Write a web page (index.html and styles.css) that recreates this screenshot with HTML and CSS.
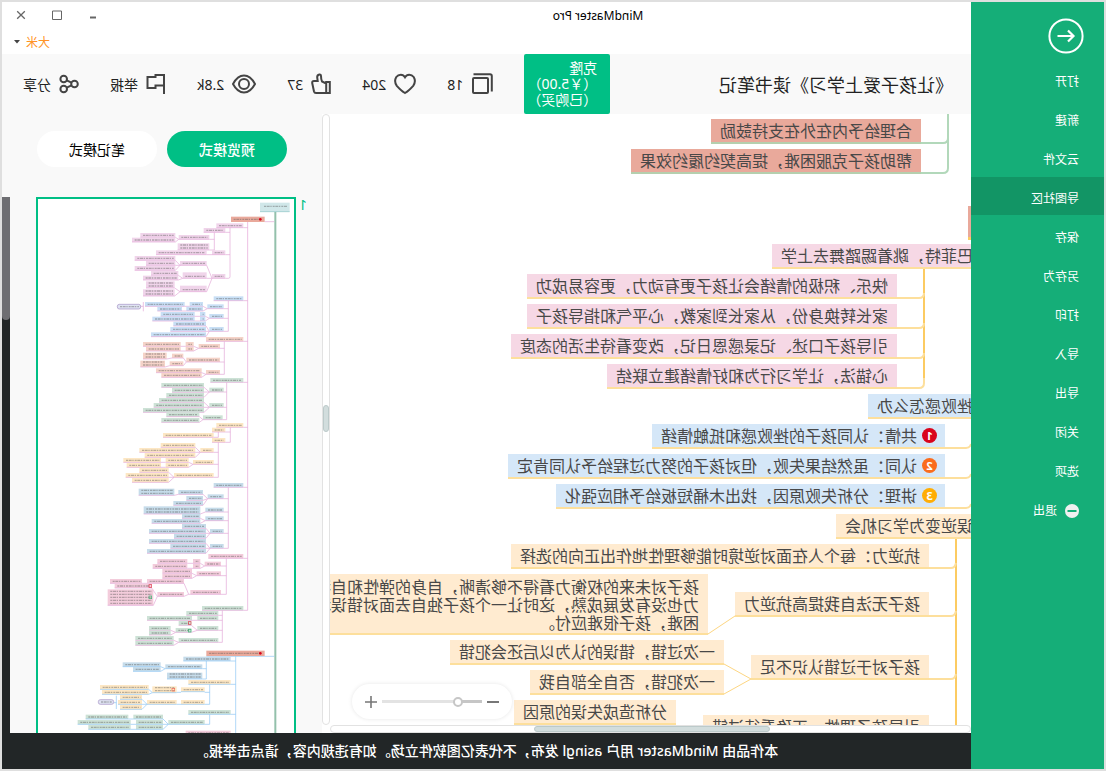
FILE: index.html
```html
<!DOCTYPE html>
<html lang="zh-CN">
<head>
<meta charset="utf-8">
<title>MindMaster Pro</title>
<link rel="stylesheet" href="styles.css">
</head>
<body>
<div class="app">
  <nav class="sidebar">
    <button class="back" aria-label="返回">
      <svg viewBox="0 0 36 36" width="36" height="36"><circle cx="18" cy="18" r="16.6" fill="none" stroke="#fff" stroke-width="2"/><path d="M26.500 18H11M16 12.500L10.500 18L16 23.500" fill="none" stroke="#fff" stroke-width="2.200"/></svg>
    </button>
    <button class="item">打开</button>
    <button class="item">新建</button>
    <button class="item">云文件</button>
    <button class="item active">导图社区</button>
    <button class="item">保存</button>
    <button class="item">另存为</button>
    <button class="item">打印</button>
    <button class="item">导入</button>
    <button class="item">导出</button>
    <button class="item">关闭</button>
    <button class="item">选项</button>
    <button class="item"><svg viewBox="0 0 14 14" width="14" height="14"><circle cx="7" cy="7" r="7" fill="#f0f0f0"/><path d="M2.500 7H11.500" stroke="#15ae78" stroke-width="2"/></svg>退出</button>
  </nav>

  <div class="main">
    <header class="titlebar">
      <div class="row">
        <h1 class="app-name">MindMaster Pro</h1>
        <div class="controls">
          <button aria-label="最小化"><svg viewBox="0 0 10 10" width="10" height="10"><path d="M2 7.500H8" stroke="#666" stroke-width="2"/></svg></button>
          <button aria-label="最大化"><svg viewBox="0 0 10 10" width="10" height="10"><path d="M.5 1H9.500V9.500H.5Z" fill="none" stroke="#666" stroke-width="1"/></svg></button>
          <button aria-label="关闭窗口"><svg viewBox="0 0 10 10" width="10" height="10"><path d="M1.200 1.200L8.800 8.800M8.800 1.200L1.200 8.800" stroke="#666" stroke-width="1.300"/></svg></button>
        </div>
      </div>
      <div class="row end">
        <button class="user">大米<svg viewBox="0 0 6 4" width="6" height="4"><path d="M0 0H6L3 3.500Z" fill="#444"/></svg></button>
      </div>
    </header>

    <div class="toolbar">
      <h2 class="doc-title">《让孩子爱上学习》读书笔记</h2>
      <button class="clone">克隆<br>（￥5.00）<br>（已购买）</button>
      <button class="stat"><svg viewBox="0 0 22 22" width="22" height="22"><rect x="5" y="5" width="15" height="15" rx="1"/><path d="M19.500 1.200H3Q1.200 1.200 1.200 3V18.500"/></svg>18</button>
      <button class="stat"><svg viewBox="0 0 22 22" width="22" height="22"><path d="M11 20Q7.500 18 2.800 12.800Q-.3 8.500 2.300 4Q4 1.700 6.800 1.700Q9.500 1.700 11 4.300Q12.500 1.700 15.200 1.700Q18 1.700 19.700 4Q22.300 8.500 19.200 12.800Q14.500 18 11 20Z"/></svg>204</button>
      <button class="stat"><svg viewBox="0 0 20 22" width="20" height="22"><path d="M1.200 9H4.800V20H1.200ZM4.800 10.500L9 8.500Q10 6 10 3Q10.200 1.200 11.600 1.500Q14 2 13.800 4.500L13.300 8H17Q19 8 18.800 10L17 18.500Q16.600 20 15 20H4.800"/></svg>37</button>
      <button class="stat"><svg viewBox="0 0 24 22" width="24" height="22"><path d="M1 11Q5.500 2.500 12 2.500T23 11Q18.500 19.500 12 19.500T1 11Z"/><circle cx="12" cy="11" r="5"/></svg>2.8k</button>
      <button class="stat"><svg viewBox="0 0 20 22" width="20" height="22"><path d="M2 21V2H10.500V4H18.500V15H10.500V12.500H2"/></svg>举报</button>
      <button class="stat"><svg viewBox="0 0 20 22" width="20" height="22"><circle cx="4.500" cy="11" r="3.300"/><circle cx="15.300" cy="6" r="3.300"/><circle cx="15.300" cy="16" r="3.300"/><path d="M7.500 9.700L12.300 7.300M7.500 12.300L12.300 14.700"/></svg>分享</button>
    </div>

    <div class="workspace">
      <div class="viewer">
        <div class="canvas">
          <svg class="links" width="100%" height="100%">
            <g class="green"><path d="M23 0V24Q23 29 28 29H50M23 24V54Q23 59 28 59H50"/></g>
            <g class="strong"><path d="M47 154V264M15 424V640"/></g>
            <g class="yellow"><path d="M47 264V269Q47 274 52 274H74M47 179Q47 184 52 184H74M47 209Q47 214 52 214H74M47 239Q47 244 52 244H74"/>
            <path d="M0 330Q1 334 5 334H26M0 360Q1 364 5 364H26M0 390Q1 394 5 394H26"/>
            <path d="M15 449Q16 454 20 454H42M15 497Q16 502 20 502H42M15 560Q16 565 20 565H42"/></g>
            <g class="thin"><path d="M236 502L263 520M247 550L220 565L247 580"/></g>
          </svg>
          <div class="stub"></div>
          <div class="node red n1">合理给予内在外在支持鼓励</div>
          <div class="node red n2">帮助孩子克服困难，提高契约履约效果</div>
          <div class="node pink n4">巴菲特，跳着踢踏舞去上学</div>
          <div class="node pink n5">快乐、积极的情绪会让孩子更有动力，更容易成功</div>
          <div class="node pink n6">家长转换身份，从家长到家教，心平气和指导孩子</div>
          <div class="node pink n7">引导孩子口述、记录感恩日记，改变看待生活的态度</div>
          <div class="node pink n8">心锚法，让学习行为和好情绪建立联结</div>
          <div class="node blue n9">挫败感怎么办</div>
          <div class="node blue n10"><span class="num one">1</span>共情：认同孩子的挫败感和抵触情绪</div>
          <div class="node blue n11"><span class="num two">2</span>认同：虽然结果失败，但对孩子的努力过程给予认同肯定</div>
          <div class="node blue n12"><span class="num three">3</span>讲理：分析失败原因，找出木桶短板给予相应强化</div>
          <div class="node orange n13">误逆变为学习机会</div>
          <div class="node orange n14">抗逆力：每个人在面对逆境时能够理性地作出正向的选择</div>
          <div class="node orange multi n15">孩子对未来的权衡力看得不够清晰，自身的弹性和自我<br>力也没有发展成熟，这时让一个孩子独自去面对错误和<br>困难，孩子很难应付。</div>
          <div class="node orange n16">孩子无法自我提高抗逆力</div>
          <div class="node orange n17">一次过错，错误的认为以后还会犯错</div>
          <div class="node orange n18">一次犯错，否自全部自我</div>
          <div class="node orange n19">孩子对于过错认识不足</div>
          <div class="node orange n20">分析造成失误的原因</div>
          <div class="node orange n21">引导孩子理性、正确看待过错</div>
          <div class="zoom">
            <button aria-label="缩小"><svg viewBox="0 0 12 12" width="12" height="12"><path d="M0 6H12" stroke="#777" stroke-width="2"/></svg></button>
            <input type="range" min="0" max="100" value="21" aria-label="缩放">
            <button aria-label="放大"><svg viewBox="0 0 12 12" width="12" height="12"><path d="M0 6H12M6 0V12" stroke="#777" stroke-width="1.600"/></svg></button>
          </div>
        </div>
        <div class="vbar"><div class="vthumb"></div></div>
        <div class="hbar"><div class="hthumb"></div></div>
      </div>

      <aside class="panel">
        <div class="modes">
          <button class="mode on">预览模式</button>
          <button class="mode">笔记模式</button>
        </div>
        <div class="pages">
          <span class="page-no">1</span>
          <div class="page"><svg id="mini" viewBox="6 6 768 1602" preserveAspectRatio="xMinYMin slice"></svg></div>
          <div class="dark-bar"><div class="dark-thumb"></div></div>
        </div>
      </aside>
    </div>

    <footer class="notice">本作品由 MindMaster 用户 asingl 发布，不代表亿图软件立场。如有违规内容，请点击举报。</footer>
  </div>
</div>
<script src="mini.js"></script>
</body>
</html>
```
FILE: styles.css
```css
* { box-sizing: border-box; }
body { margin: 0; font-family: "Noto Sans", "Noto Sans CJK SC", sans-serif; font-size: 12px; color: #222; }
button { border: 0; padding: 0; background: none; font: inherit; color: inherit; }
h1, h2 { margin: 0; font-weight: 400; }

.app { display: flex; height: 100vh; border: 2px solid #dfdfdf; background: #fff; transform: scaleX(-1); overflow: hidden; }

.sidebar { flex: 0 0 133px; display: flex; flex-direction: column; background: #15ae78; color: #fff; }
.back { align-self: flex-start; width: 36px; height: 36px; margin: 16px 0 6px 20px; }
.back svg { display: block; }
.item { display: flex; align-items: center; gap: 8px; flex: 0 0 38px; margin-bottom: 1px; padding: 6px 0 0 25px; line-height: 16px; text-align: left; }
.item.active { background: #129565; }

.main { flex: 1; min-width: 0; display: flex; flex-direction: column; }
.titlebar { flex: 0 0 52px; display: flex; flex-direction: column; }
.row { display: flex; align-items: center; height: 26px; }
.row.end { justify-content: flex-end; padding: 2px 14px 0 0; }
.app-name { flex: 1; text-align: center; font-size: 12px; color: #000; }
.controls { flex: 0 0 223px; display: flex; justify-content: flex-end; gap: 26px; padding-right: 14px; }
.controls button, .controls svg { display: block; width: 10px; height: 10px; }
.user { display: flex; align-items: center; gap: 6px; color: #ff9326; }
.user svg { margin-right: -2px; }

.toolbar { flex: 0 0 60px; display: flex; align-items: center; gap: 31px; padding: 0 21px 0 18px; background: #f9f9f9; }
.doc-title { flex: 1; font-size: 18px; white-space: nowrap; }
.clone { width: 86px; height: 60px; padding-left: 13px; border-radius: 2px; background: #00bf85; color: #fff; font-size: 14px; line-height: 16px; text-align: left; white-space: nowrap; }
.stat { display: flex; align-items: center; gap: 8px; font-size: 14px; white-space: nowrap; }
.stat svg { fill: none; stroke: #444; stroke-width: 2; }

.workspace { flex: 1; min-height: 0; display: flex; }
.viewer { flex: 1; min-width: 0; display: grid; grid-template-columns: 1fr 8px; grid-template-rows: 1fr 8px; }
.canvas { position: relative; overflow: hidden; background: #fff; }
.vbar, .hbar { border: 1px solid #e2e2e2; border-radius: 4px; background: #fff; }
.vbar { padding-top: 290px; }
.hbar { padding-left: 200px; }
.vthumb, .hthumb { border: 1px solid #bccaca; border-radius: 3px; background: #d2dddd; }
.vthumb { height: 27px; }
.hthumb { width: 236px; height: 6px; }

.links { position: absolute; left: 0; top: 0; }
.links path { fill: none; stroke-width: 2; }
.green path { stroke: #b2d8ba; }
.strong path { stroke: #fccb62; }
.yellow path { stroke: #fddf9c; }
.thin path { stroke: #fdd682; stroke-width: 1; }

.node { position: absolute; height: 25px; padding: 0 9px; border-bottom: 2px solid #fddf9c; color: #484848; font-size: 16px; line-height: 24px; white-space: nowrap; }
.red { background: #e9a99b; border-color: #b5cfae; }
.pink { background: #f6d8e5; }
.blue { background: #d5e7f8; }
.orange { background: #ffebd0; }
.multi { height: 61px; padding-top: 4px; line-height: 18px; }
.stub { position: absolute; left: 0; top: 92px; width: 3px; height: 34px; background: #e9a99b; border-bottom: 3px solid #fccb62; }
.n1 { left: 50px; top: 5px; }
.n2 { left: 50px; top: 35px; }
.n4 { left: -11px; top: 130px; }
.n5 { left: 74px; top: 160px; }
.n6 { left: 74px; top: 190px; }
.n7 { left: 74px; top: 220px; }
.n8 { left: 74px; top: 250px; }
.n9 { left: -11px; top: 280px; }
.n10, .n11, .n12 { left: 26px; display: flex; align-items: center; padding-left: 8px; }
.n10 { top: 310px; }
.n11 { top: 340px; }
.n12 { top: 370px; }
.n13 { left: -11px; top: 400px; }
.n14 { left: 42px; top: 430px; }
.n15 { left: 263px; top: 460px; }
.n16 { left: 42px; top: 478px; }
.n17 { left: 247px; top: 526px; }
.n18 { left: 247px; top: 556px; }
.n19 { left: 42px; top: 541px; }
.n20 { left: 295px; top: 586px; }
.n21 { left: 42px; top: 601px; }
.num { width: 15px; height: 15px; margin-right: 5px; border-radius: 50%; color: #fff; font-size: 11px; font-weight: 700; line-height: 15px; text-align: center; }
.one { background: #d9041b; }
.two { background: #fa6c1d; }
.three { background: #ffad05; }

.zoom { position: absolute; right: 22px; bottom: 6px; display: flex; align-items: center; justify-content: center; gap: 5px; width: 160px; height: 35px; border-radius: 18px; background: #fff; box-shadow: 0 0 4px rgba(0, 0, 0, .1); }
.zoom button, .zoom svg { display: block; width: 12px; height: 12px; }
.zoom input { appearance: none; width: 100px; height: 12px; margin: 0; background: linear-gradient(90deg, #c6c6c6 25%, #e3e3e3 25%) center / 100% 3px no-repeat; }
.zoom input::-webkit-slider-thumb { appearance: none; width: 10px; height: 10px; border: 2px solid #c6c6c6; border-radius: 50%; background: #fff; }

.panel { flex: 0 0 320px; display: flex; flex-direction: column; background: #f9f9f9; }
.modes { display: flex; gap: 10px; padding: 17px 35px 30px; }
.mode { flex: 1; height: 36px; border-radius: 18px; background: #fff; color: #000; font-size: 14px; }
.mode.on { background: #00bf85; color: #fff; font-weight: 500; }
.pages { flex: 1; min-height: 0; display: flex; overflow: hidden; }
.page-no { flex: 0 0 26px; padding-right: 3px; color: #00bf85; font-size: 14px; line-height: 16px; text-align: right; }
.page { flex: 1; margin-right: 26px; border: 2px solid #00bf85; border-bottom: 0; background: #fff; overflow: hidden; }
#mini { display: block; width: 100%; height: 100%; }
.dark-bar { flex: 0 0 8px; background: #222627; }
.dark-thumb { height: 123px; border-radius: 0 0 4px 4px; background: #6e6e72; }

.notice { flex: 0 0 36px; background: #222627; color: #fff; font-size: 14px; font-weight: 500; line-height: 36px; text-align: center; white-space: nowrap; }
```
FILE: mini.js
```js
// Page thumbnail: every box is [left, right, baseline, height], measured from the outer edge of the page.
const NS = 'http://www.w3.org/2000/svg';
const PINK = '#e3a6d6', PALE = '#eec0e4', BLUE = '#8cc6f5';
const sections = [
  { dy: -21, line: PINK, groups: [
    ['#f0d4ea', [[649,730,113],[611,676,127],[536,628,148],[421,526,142],[396,526,156],[533,628,180,20],[636,676,194],[468,620,194],[404,526,211],[438,526,226],[404,526,241],[540,620,226],[453,535,256],[429,535,270],[548,620,265,18],[636,676,265],[438,524,294,20],[540,620,305,18],[429,524,318,20]]],
    ['#c8dff5', [[641,730,332],[622,671,356],[569,609,349],[435,554,349],[559,609,363],[472,546,363],[628,671,385],[600,616,379],[482,584,379],[600,616,393],[457,584,393],[628,671,424],[520,618,408],[511,618,424],[453,618,440]]],
    ['#f5d3c8', [[618,730,454],[596,660,475],[557,581,469],[429,542,469],[557,581,483],[438,542,483],[559,660,516],[516,550,504],[429,500,507,19],[509,550,527],[421,495,531,19],[618,660,553],[468,605,548],[484,605,562]]],
    ['#cde2d6', [[631,730,577]]]
  ], paths: 'M794 95H823M730 113H743M676 127H690M690 108V260Q690 265 685 265H676M676 194H690M643 127V181M628 148H643M628 180H643M536 148L526 142M536 148L526 156M620 194H636M540 226L526 211M540 226H526M540 226L526 241M636 265L620 226M636 265H620M636 265L620 305M548 265L535 256M548 265L535 270M540 305L524 294M540 305L524 318M730 332H743M685 332V424M671 356H685M671 385H685M671 424H685M622 356L609 349M622 356L609 363M554 349H569M546 363H559M628 385L616 379M628 385L616 393M628 424L618 408M628 424H618M628 424L618 440M584 379H600M584 393H600M421 349H430M430 336V364M730 454H743M673 454V553M660 475H673M660 516H673M660 553H673M596 475L581 469M596 475L581 483M542 469H557M542 483H557M559 516L550 504M559 516L550 527M516 504L500 507M509 527L495 531M618 553L605 548M618 553L605 562M730 577H743M680 577V689' },
  { dy: 549, line: PINK, groups: [
    ['#cde2d6', [[628,671,36],[484,612,22],[516,612,37],[499,612,52],[477,612,67],[628,671,82],[461,612,82],[429,612,97],[609,668,119],[499,598,110],[484,598,127]]],
    ['#fde7c4', [[649,730,142],[636,676,156],[489,641,172],[636,676,187],[482,586,202],[601,641,217],[418,586,217],[434,586,232],[497,566,247],[370,483,247],[579,641,253],[497,566,262],[380,483,262],[418,506,277],[522,641,292],[377,506,292],[396,506,307]]],
    ['#c6dcea', [[641,730,322],[416,523,346,20],[535,609,343],[623,671,356],[559,609,361],[520,609,376],[431,601,402,23],[616,671,396],[546,601,415],[616,671,422],[455,601,430],[546,618,445],[630,671,460],[447,618,460],[522,618,475],[447,618,490],[511,618,505],[630,671,505],[441,618,520]]],
    ['#f3ccdb', [[625,730,535],[579,601,550],[472,562,550],[614,663,558],[579,601,565],[458,562,565],[487,576,580],[590,663,587],[487,576,595]]]
  ], paths: 'M671 36H680M671 82H680M668 119H680M628 36L612 22M628 36H612M628 36L612 52M628 82L612 67M628 82H612M628 82L612 97M609 119L598 110M609 119L598 127M730 142H743M691 142V187M676 156H691M676 187H691M655 156V172H641M655 187V292M641 217H655M641 253H655M641 292H655M601 217L586 202M601 217H586M601 217L586 232M579 253L566 247M579 253L566 262M483 247H497M483 262H497M522 292L506 277M522 292H506M522 292L506 307M730 322H743M685 322V505M671 356H685M671 396H685M671 422H685M671 460H685M671 505H685M623 356L609 343M623 356L609 361M623 356L609 376M535 343L523 346M616 396L601 402M616 422L601 415M616 422L601 430M630 460L618 445M630 460H618M630 460L618 475M630 505L618 490M630 505H618M630 505L618 520M730 535H743M679 535V643M663 558H679M663 587H679M614 558L601 550M614 558L601 565M562 550H579M562 565H579M590 587L576 580M590 587L576 595' },
  { dy: 1119, line: PINK, groups: [
    ['#f3ccdb', [[441,552,40],[330,426,40],[571,663,73],[344,455,54],[323,460,106,48],[472,552,79]]],
    ['#cde2d6', [[606,730,121],[559,655,136],[441,576,151],[592,655,151],[536,574,166],[592,655,181],[527,574,187],[447,512,181],[447,512,195],[406,521,211],[536,655,217],[406,521,226]]]
  ], paths: 'M663 73H679M566 73L552 40M566 73H571M566 73L552 79M426 40H441M472 79L455 54M472 79L460 106M730 121H743M667 121V217M655 136H667M655 151H667M655 181H667M655 217H667M576 151H592M592 181L574 166M592 181L574 187M527 187L512 181M527 187L512 195M536 217L521 211M536 217L521 226' },
  { dy: 1119, line: BLUE, groups: [
    ['#c6dcea', [[550,692,273],[368,482,290],[496,607,296],[399,482,304],[501,607,327,19]]],
    ['#fde7c4', [[565,692,343],[300,446,358],[457,530,368,19],[543,614,365],[306,446,373],[360,426,388],[354,426,403],[441,530,403],[543,614,403],[360,426,418]]],
    ['#cde2d6', [[565,692,433],[257,385,447],[400,489,447],[505,614,463],[233,392,463],[408,489,463],[265,392,478],[408,489,478]]],
    ['#f3ccdb', [[557,692,495]]]
  ], paths: 'M619 259H823M707 259V495M692 273H707M619 273V327H607M607 296H619M496 296L482 290M496 296L482 304M692 343H707M629 343V403H614M614 367H629M543 367H530M457 368L446 358M457 368L446 373M530 403H543M441 403L426 388M441 403H426M441 403L426 418M349 377V417M341 398H349M692 433H707M629 433V463H614M505 463L489 447M505 463H489M505 463L489 478M385 447H400M392 463H408M392 478H408' }
];

function add(parent, tag, attrs) {
  const el = document.createElementNS(NS, tag);
  for (const k in attrs) el.setAttribute(k, attrs[k]);
  parent.appendChild(el);
  return el;
}

function words(g, x1, x2, y) {
  add(g, 'path', { d: `M${x1 + 8} ${y}H${x2 - 5}`, stroke: '#555', 'stroke-opacity': .4, 'stroke-width': 4, 'stroke-dasharray': '6 2 9 2 4 3' });
}

const root = add(document.getElementById('mini'), 'g', { transform: 'translate(888 0) scale(-1 1)' });
add(root, 'path', { d: 'M826 44V1700', stroke: '#93c1ab', 'stroke-width': 6 });
add(root, 'path', { d: 'M743 75V1240', stroke: PALE, 'stroke-width': 3 });
add(root, 'rect', { x: 780, y: 17, width: 89, height: 27, fill: '#d0e7e9' });
add(root, 'path', { d: 'M780 44H869', stroke: '#86c3c4', 'stroke-width': 2 });
words(root, 784, 866, 28);

for (const s of sections) {
  const g = add(root, 'g', { transform: `translate(0 ${s.dy})` });
  add(g, 'path', { d: s.paths, fill: 'none', stroke: s.line, 'stroke-width': 2 });
  for (const [fill, boxes] of s.groups) {
    for (const [x1, x2, y, h = 13] of boxes) {
      add(g, 'rect', { x: x1, y: y - h, width: x2 - x1, height: h, fill });
      add(g, 'path', { d: `M${x1} ${y}H${x2}`, stroke: s.line, 'stroke-width': 2 });
      for (let t = y - 6; t > y - h + 3; t -= 9) words(g, x1, x2, t);
    }
  }
}

for (const [x, y] of [[693, 59], [619, 1361]]) {
  add(root, 'rect', { x, y, width: 794 - x, height: 16, fill: '#e9a99b' });
  words(root, x, 784, y + 8);
  add(root, 'circle', { cx: 781, cy: y + 8, r: 4, fill: '#d9041b' });
}
for (const [x, y, c] of [[447, 1163, '#e0394a'], [447, 1197, '#3bb273'], [565, 1274, '#e0394a'], [565, 1297, '#3bb273'], [516, 1474, '#ef6a5a']]) {
  add(root, 'rect', { x, y, width: 8, height: 8, fill: 'none', stroke: c, 'stroke-width': 2 });
}
for (const [x, y, w] of [[352, 322, 70], [295, 1508, 46]]) {
  add(root, 'rect', { x, y, width: w, height: 14, rx: 6, fill: '#dfe3f2', stroke: '#a58fc4', 'stroke-width': 2 });
  words(root, x, x + w, y + 7);
}
```
